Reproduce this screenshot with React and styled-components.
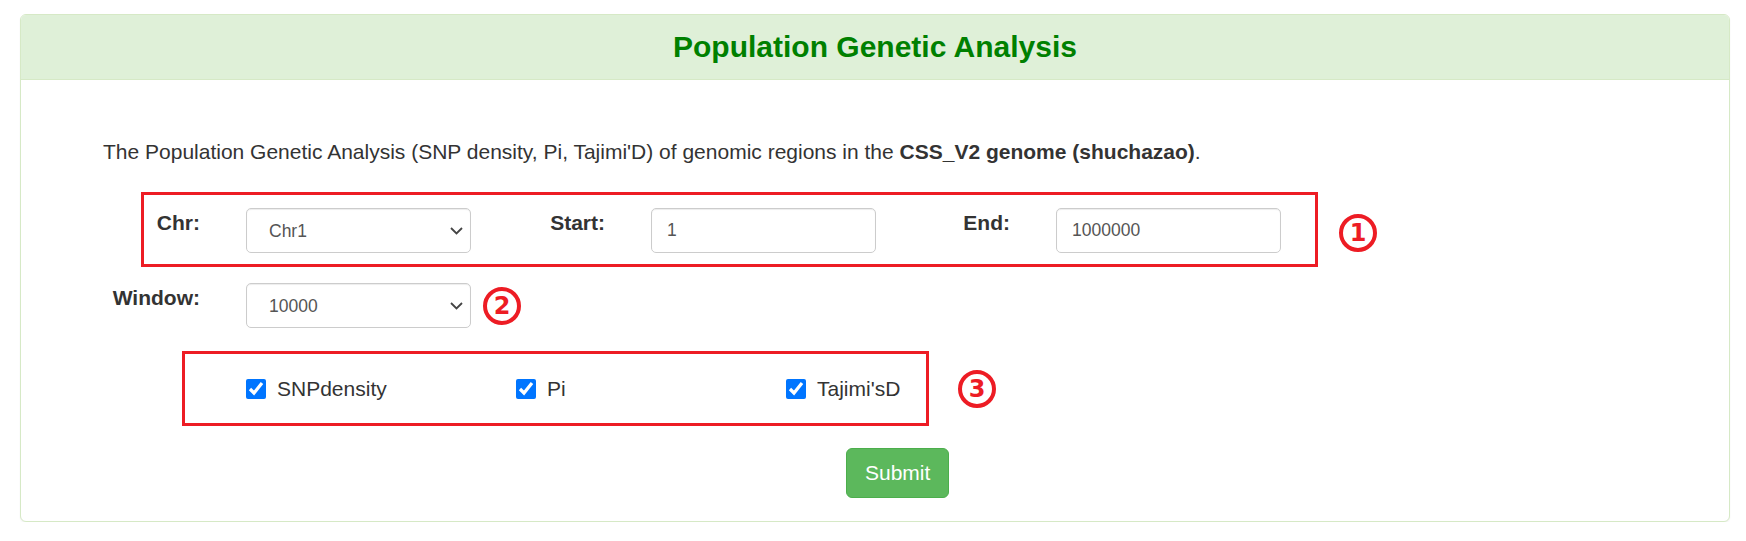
import React from "react";
import styled, { createGlobalStyle } from "styled-components";

const GlobalStyle = createGlobalStyle`
  html, body {
    margin: 0;
    padding: 0;
    background: #fff;
  }
  body {
    font-family: "Liberation Sans", Arial, sans-serif;
    font-size: 21px;
    line-height: 30px;
    color: #333;
  }
  * {
    box-sizing: border-box;
  }
`;

const Page = styled.div`
  padding: 14px 16px 0 20px;
`;

const Panel = styled.div`
  border: 1px solid #d6e9c6;
  border-radius: 6px;
  background: #fff;
  box-shadow: 0 1px 2px rgba(0, 0, 0, 0.06);
  overflow: hidden;
`;

const PanelHeading = styled.div`
  height: 65px;
  display: flex;
  align-items: center;
  justify-content: center;
  background: #dff0d8;
  border-bottom: 1px solid #d6e9c6;
`;

const PanelTitle = styled.h3`
  margin: 0;
  font-size: 30px;
  line-height: 34px;
  font-weight: bold;
  color: #008000;
`;

const PanelBody = styled.div`
  padding: 57px 0 23px 82px;
`;

const Intro = styled.p`
  margin: 0;
  b {
    font-weight: bold;
  }
`;

const Row = styled.div`
  display: flex;
  align-items: ${(p) => p.$align || "flex-start"};
  margin-top: ${(p) => p.$top || 0}px;
`;

// red annotation frame drawn round a group of controls
const FieldsFrame = styled.div`
  display: flex;
  align-items: flex-start;
  margin-left: 38px;
  padding: 13px 34px 11px 0;
  border: 3px solid #ed1c24;
`;

const ChecksFrame = styled.div`
  display: grid;
  grid-template-columns: 270px 270px 140px;
  align-items: center;
  height: 75px;
  margin-left: 79px;
  padding-left: 61px;
  border: 3px solid #ed1c24;
`;

const Marker = styled.span`
  flex: none;
  width: 38px;
  height: 38px;
  margin-left: ${(p) => p.$left}px;
  margin-top: ${(p) => p.$top || 0}px;
  display: flex;
  align-items: center;
  justify-content: center;
  border: 4px solid #ed1c24;
  border-radius: 50%;
  color: #ed1c24;
  font-family: "DejaVu Sans", "Liberation Sans", sans-serif;
  font-weight: bold;
  font-size: 24px;
  line-height: 1;
`;

const Field = styled.div`
  display: flex;
  align-items: flex-start;
`;

const FieldLabel = styled.label`
  width: ${(p) => p.$width}px;
  margin-right: 46px;
  text-align: right;
  font-weight: bold;
  line-height: 30px;
  white-space: nowrap;
`;

const SelectWrap = styled.div`
  position: relative;
  width: 225px;
  height: 45px;
`;

const Select = styled.select`
  appearance: none;
  width: 100%;
  height: 100%;
  padding: 0 40px 0 22px;
  font-family: "Liberation Sans", Arial, sans-serif;
  font-size: 17.5px;
  color: #555;
  background: #fff;
  border: 1px solid #ccc;
  border-radius: 5px;
  box-shadow: inset 0 1px 1px rgba(0, 0, 0, 0.075);
  outline: none;
`;

const Chevron = styled.svg`
  position: absolute;
  right: 8px;
  top: 19px;
  pointer-events: none;
`;

const TextInput = styled.input`
  width: 225px;
  height: 45px;
  padding: 0 15px;
  font-family: "Liberation Sans", Arial, sans-serif;
  font-size: 17.5px;
  color: #555;
  background: #fff;
  border: 1px solid #ccc;
  border-radius: 5px;
  box-shadow: inset 0 1px 1px rgba(0, 0, 0, 0.075);
  outline: none;
`;

const CheckItem = styled.label`
  display: flex;
  align-items: center;
  gap: 11px;
  white-space: nowrap;
`;

const CheckBox = styled.input`
  width: 20px;
  height: 20px;
  margin: 0;
  accent-color: #0075ff;
`;

const SubmitButton = styled.button`
  margin-left: 743px;
  height: 50px;
  padding: 0 18px;
  font-family: "Liberation Sans", Arial, sans-serif;
  font-size: 21px;
  color: #fff;
  background: #5cb85c;
  border: 1px solid #4cae4c;
  border-radius: 6px;
  cursor: pointer;
`;

const SelectField = ({ value, options }) => (
  <SelectWrap>
    <Select defaultValue={value}>
      {options.map((o) => (
        <option key={o}>{o}</option>
      ))}
    </Select>
    <Chevron width="13" height="8" viewBox="0 0 13 8">
      <path d="M1 1 L6.5 6.5 L12 1" fill="none" stroke="#444" strokeWidth="1.8" />
    </Chevron>
  </SelectWrap>
);

const App = () => {
  return (
    <>
      <GlobalStyle />
      <Page>
        <Panel>
          <PanelHeading>
            <PanelTitle>Population Genetic Analysis</PanelTitle>
          </PanelHeading>
          <PanelBody>
            <Intro>
              The Population Genetic Analysis (SNP density, Pi, Tajimi'D) of genomic regions in the{" "}
              <b>CSS_V2 genome (shuchazao)</b>.
            </Intro>

            <Row $top={25}>
              <FieldsFrame>
                <Field>
                  <FieldLabel $width={56}>Chr:</FieldLabel>
                  <SelectField value="Chr1" options={["Chr1", "Chr2", "Chr3", "Chr4", "Chr5"]} />
                </Field>
                <Field>
                  <FieldLabel $width={134}>Start:</FieldLabel>
                  <TextInput type="text" defaultValue="1" />
                </Field>
                <Field>
                  <FieldLabel $width={134}>End:</FieldLabel>
                  <TextInput type="text" defaultValue="1000000" />
                </Field>
              </FieldsFrame>
              <Marker $left={21} $top={22}>1</Marker>
            </Row>

            <Row $top={16}>
              <FieldLabel $width={97}>Window:</FieldLabel>
              <SelectField value="10000" options={["10000", "50000", "100000"]} />
              <Marker $left={12} $top={4}>2</Marker>
            </Row>

            <Row $top={23} $align="center">
              <ChecksFrame>
                <CheckItem>
                  <CheckBox type="checkbox" defaultChecked />
                  SNPdensity
                </CheckItem>
                <CheckItem>
                  <CheckBox type="checkbox" defaultChecked />
                  Pi
                </CheckItem>
                <CheckItem>
                  <CheckBox type="checkbox" defaultChecked />
                  Tajimi'sD
                </CheckItem>
              </ChecksFrame>
              <Marker $left={29}>3</Marker>
            </Row>

            <Row $top={22}>
              <SubmitButton type="button">Submit</SubmitButton>
            </Row>
          </PanelBody>
        </Panel>
      </Page>
    </>
  );
};

export default App;
